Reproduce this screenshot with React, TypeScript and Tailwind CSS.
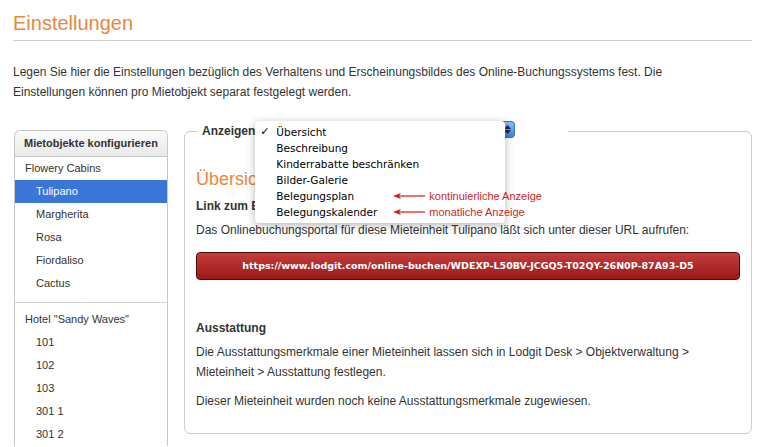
import React from "react";

const sans = { fontFamily: '"Liberation Sans", Arial, sans-serif' };

const flowery = ["Tulipano", "Margherita", "Rosa", "Fiordaliso", "Cactus"];
const sandy = ["101", "102", "103", "301 1", "301 2"];
const menu = [
  "Übersicht",
  "Beschreibung",
  "Kinderrabatte beschränken",
  "Bilder-Galerie",
  "Belegungsplan",
  "Belegungskalender",
];

function Arrow({ label }: { label: string }) {
  return (
    <div className="flex items-center h-[16px] leading-[16px]">
      <svg width="34" height="8" viewBox="0 0 34 8" className="mr-[2px]">
        <line x1="4" y1="4" x2="32" y2="4" stroke="#cc1f1f" strokeWidth="1.2" />
        <path d="M0 4 L8 1 L6 4 L8 7 Z" fill="#cc1f1f" />
      </svg>
      <span className="text-[11px] text-[#cc1f1f] whitespace-nowrap">{label}</span>
    </div>
  );
}

function Sidebar() {
  return (
    <div className="w-[154px] mt-[8px] border border-b-0 border-[#c8c8c8] rounded-t-[6px] text-[11px] text-[#333]">
      <div className="h-[26px] flex items-center px-[9px] whitespace-nowrap font-bold text-[11px] bg-gradient-to-b from-[#fbfbfb] to-[#e9e9e9] rounded-t-[6px] border-b border-[#c8c8c8]">
        Mietobjekte konfigurieren
      </div>
      <div className="pb-[7px] border-b border-[#d4d4d4]">
        <div className="h-[23px] flex items-center pl-[10px]">Flowery Cabins</div>
        {flowery.map((n) => (
          <div
            key={n}
            className={
              n === "Tulipano"
                ? "h-[23px] flex items-center pl-[21px] bg-[#3a76d8] text-white"
                : "h-[23px] flex items-center pl-[21px]"
            }
          >
            {n}
          </div>
        ))}
      </div>
      <div className="pt-[5px]">
        <div className="h-[23px] flex items-center pl-[10px]">Hotel "Sandy Waves"</div>
        {sandy.map((n) => (
          <div key={n} className="h-[23px] flex items-center pl-[21px]">
            {n}
          </div>
        ))}
      </div>
    </div>
  );
}

function Dropdown() {
  return (
    <div className="absolute left-0 top-0 w-[250px] py-[3px] bg-white rounded-[4px] shadow-[0_2px_8px_rgba(0,0,0,0.3)] z-10">
      {menu.map((m, i) => (
        <div
          key={m}
          className="h-[16px] leading-[16px] flex items-center text-[10.5px] text-black whitespace-nowrap"
          style={{ fontFamily: '"DejaVu Sans", Verdana, sans-serif' }}
        >
          <span className="w-[21px] pl-[5px] text-[11px]">{i === 0 ? "✓" : ""}</span>
          {m}
        </div>
      ))}
      <div className="absolute left-[138px] top-[67px] w-[200px]" style={sans}>
        <Arrow label="kontinuierliche Anzeige" />
        <Arrow label="monatliche Anzeige" />
      </div>
    </div>
  );
}

export default function App() {
  return (
    <div className="bg-white w-[778px] h-[447px] overflow-hidden" style={sans}>
      <div className="ml-[13px] w-[739px]">
        <h1 className="pt-[12px] pb-[6px] text-[20px] leading-[22px] text-[#e9873a] border-b border-[#cfcfcf]">
          Einstellungen
        </h1>
        <p className="mt-[21px] text-[12px] leading-[20px] text-[#333]">
          Legen Sie hier die Einstellungen bezüglich des Verhaltens und Erscheinungsbildes des Online-Buchungssystems fest. Die
          <br />
          Einstellungen können pro Mietobjekt separat festgelegt werden.
        </p>
        <div className="mt-[20px] flex items-start gap-[16px] pl-[1px]">
          <Sidebar />
          <fieldset className="flex-1 border border-[#cfcfcf] rounded-[6px] px-[11px] pb-[22px] text-[12px] text-[#333]">
            <legend className="ml-[2px] px-[4px] w-[370px] h-[18px]">
              <div className="flex items-center h-[18px]">
                <span className="font-bold">Anzeigen</span>
                <div className="relative w-[260px] h-[17px] -mt-[4px]">
                  <div className="absolute inset-0 rounded-[4px] border border-[#8aa8d8] bg-white" />
                  <div className="absolute right-0 top-0 w-[16px] h-[17px] rounded-r-[4px] bg-gradient-to-b from-[#8fc0f5] to-[#3b7fdc] border border-[#3d6fb8] flex flex-col items-center justify-center gap-[1px]">
                    <svg width="7" height="4" viewBox="0 0 7 4"><path d="M0 4 L3.5 0 L7 4 Z" fill="#1d2d4a" /></svg>
                    <svg width="7" height="4" viewBox="0 0 7 4"><path d="M0 0 L3.5 4 L7 0 Z" fill="#1d2d4a" /></svg>
                  </div>
                  <Dropdown />
                </div>
              </div>
            </legend>
            <h2 className="mt-[28px] text-[18px] leading-[22px] text-[#e9873a]">Übersicht</h2>
            <div className="mt-[6px] font-bold leading-[20px]">Link zum Buchungsportal</div>
            <p className="mt-[4px] leading-[20px]">
              Das Onlinebuchungsportal für diese Mieteinheit Tulipano läßt sich unter dieser URL aufrufen:
            </p>
            <div
              className="mt-[12px] h-[28px] flex items-center justify-center rounded-[4px] border border-[#4a0c0c] bg-gradient-to-b from-[#c43c3c] to-[#9a1a1a] text-white font-bold text-[9.5px]"
              style={{ fontFamily: '"DejaVu Sans", Verdana, sans-serif' }}
            >
              https://www.lodgit.com/online-buchen/WDEXP-L50BV-JCGQ5-T02QY-26N0P-87A93-D5
            </div>
            <div className="mt-[38px] font-bold leading-[20px]">Ausstattung</div>
            <p className="mt-[4px] leading-[20px]">
              Die Ausstattungsmerkmale einer Mieteinheit lassen sich in Lodgit Desk &gt; Objektverwaltung &gt;
              <br />
              Mieteinheit &gt; Ausstattung festlegen.
            </p>
            <p className="mt-[9px] leading-[20px]">Dieser Mieteinheit wurden noch keine Ausstattungsmerkmale zugewiesen.</p>
          </fieldset>
        </div>
      </div>
    </div>
  );
}
